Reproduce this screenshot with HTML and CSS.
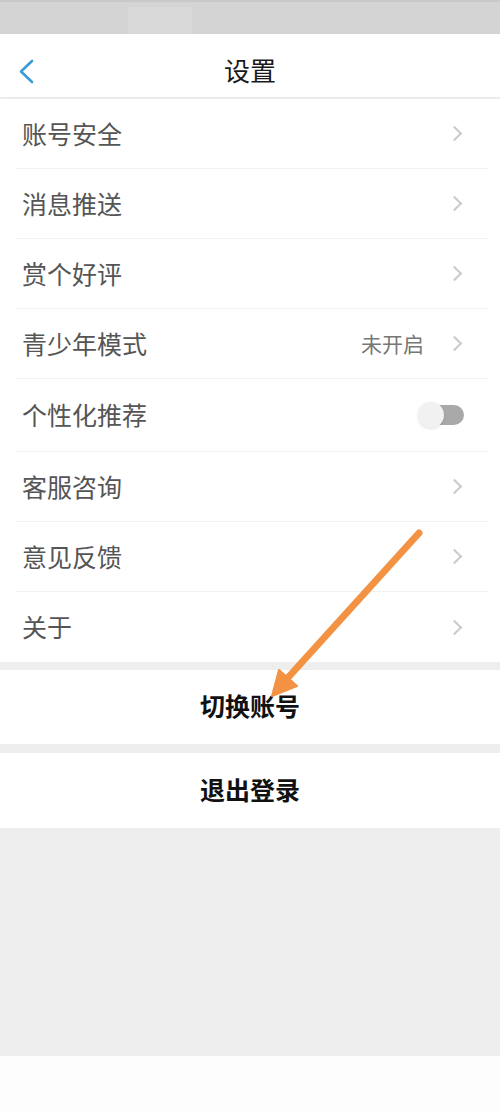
FILE: index.html
```html
<!doctype html>
<html>
<head>
	<meta charset="utf-8">
	<title>设置</title>
	<link rel="stylesheet" href="styles.css">
</head>
<body>
	<div class="page">
		<div class="status"><span class="status-block"></span></div>
		<div class="header">
			<svg class="back" width="16" height="26" viewBox="0 0 16 26">
				<polyline points="13,2 2,12.5 13,23" fill="none" stroke="#3a9bd6" stroke-width="2.6" stroke-linecap="round" stroke-linejoin="round"/>
			</svg>
			<span class="title">设置</span>
		</div>

		<ul class="list">
			<li class="row"><span class="label">账号安全</span><i class="chev"></i></li>
			<li class="row"><span class="label">消息推送</span><i class="chev"></i></li>
			<li class="row"><span class="label">赏个好评</span><i class="chev"></i></li>
			<li class="row"><span class="label">青少年模式</span><span class="extra">未开启</span><i class="chev"></i></li>
			<li class="row tall"><span class="label">个性化推荐</span><span class="switch"><span class="knob"></span></span></li>
			<li class="row"><span class="label">客服咨询</span><i class="chev"></i></li>
			<li class="row"><span class="label">意见反馈</span><i class="chev"></i></li>
			<li class="row last"><span class="label">关于</span><i class="chev"></i></li>
		</ul>

		<div class="btn switch-account">切换账号</div>
		<div class="btn logout">退出登录</div>
		<div class="filler"></div>
	</div>

	<!-- 标注箭头 -->
	<svg class="mark" width="500" height="1111" viewBox="0 0 500 1111">
		<line x1="419" y1="533" x2="284" y2="682" stroke="#f39243" stroke-width="7" stroke-linecap="round"/>
		<polygon points="272,696 279,670 297,686" fill="#f39243" stroke="#f39243" stroke-width="2" stroke-linejoin="round"/>
	</svg>
</body>
</html>
```

FILE: styles.css
```css
*{
	margin:0;
	padding:0;
}
body{
	background:#fdfdfd;
	font-family:"Noto Sans CJK SC", "Noto Sans", sans-serif;
	position:relative;
}
ul{
	list-style:none;
}
.page{
	width:500px;
	background:#eeeeee;
}
.status{
	height:34px;
	background:#d4d4d4;
	border-top:2px solid #c9c9c9;
	box-sizing:border-box;
	padding-top:5px;
	padding-left:128px;
}
.status-block{
	display:block;
	width:64px;
	height:27px;
	background:#d9d9d9;
}
.header{
	height:63px;
	background:#fff;
	display:flex;
	align-items:center;
	justify-content:center;
	position:relative;
	box-shadow:0 1px 4px rgba(0,0,0,0.025);
}
.back{
	position:absolute;
	left:19px;
	top:25px;
}
.title{
	font-size:26px;
	color:#1a1a1a;
	font-weight:normal;
	padding-top:8px;
}
.list{
	background:#fff;
	margin-top:2px;
}
.row{
	height:70px;
	margin:0 12px 0 15px;
	padding:0 25px 0 7px;
	border-bottom:1px solid #f1f1f1;
	display:flex;
	align-items:center;
	box-sizing:border-box;
}
.row.tall{
	height:73px;
}
.row.last{
	border-bottom:none;
}
.label{
	flex:1;
	font-size:25px;
	color:#555;
	padding-bottom:2px;
}
.extra{
	font-size:21px;
	color:#777;
	margin-right:25px;
	padding-bottom:2px;
}
.chev{
	display:inline-block;
	width:9px;
	height:9px;
	border-top:2px solid #cacaca;
	border-right:2px solid #cacaca;
	transform:rotate(45deg);
	margin-right:3px;
}
.switch{
	position:relative;
	width:46px;
	height:28px;
	margin-right:-1px;
}
.switch:before{
	content:"";
	position:absolute;
	left:12px;
	right:0;
	top:4px;
	height:20px;
	border-radius:10px;
	background:#a9a9a9;
}
.knob{
	position:absolute;
	left:0;
	top:1px;
	width:26px;
	height:26px;
	border-radius:50%;
	background:#f1f1f1;
	box-shadow:0 1px 3px rgba(0,0,0,0.12);
}
.btn{
	background:#fff;
	text-align:center;
	font-size:25px;
	font-weight:bold;
	color:#111;
	display:flex;
	align-items:center;
	justify-content:center;
	box-sizing:border-box;
	padding-bottom:4px;
}
.switch-account{
	margin-top:8px;
	height:74px;
}
.logout{
	margin-top:9px;
	height:75px;
}
.filler{
	height:228px;
}
.mark{
	position:absolute;
	left:0;
	top:0;
	pointer-events:none;
}
```
